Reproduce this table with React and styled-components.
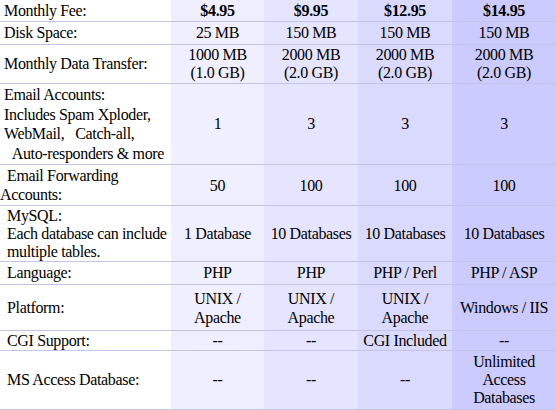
import React from "react";
import styled, { createGlobalStyle } from "styled-components";

const Global = createGlobalStyle`
  html, body { margin: 0; padding: 0; background: #ffffff; }
  body { font-family: "Liberation Serif", "Times New Roman", serif; font-size: 16px; color: #000; letter-spacing: -0.35px; }
`;

const COLS = ["#ffffff", "#efefff", "#e5e5ff", "#dadaff", "#cbcbff"];

const Table = styled.div`
  width: 556px;
  display: flex;
  flex-direction: column;
`;

const Row = styled.div`
  display: grid;
  grid-template-columns: 171px 93px 94px 94px 104px;
  height: ${(p) => p.$h}px;
  border-bottom: 1px solid #c4c4e6;
  line-height: ${(p) => p.$lh || 18}px;
`;

const Label = styled.div`
  display: flex;
  flex-direction: column;
  justify-content: center;
  background: #ffffff;
  padding-left: 4px;
  white-space: pre;
`;

const LabelLine = styled.span`
  padding-left: ${(p) => p.$indent || 0}px;
  margin-left: ${(p) => (p.$out ? -4 : 0)}px;
`;

const Cell = styled.div`
  display: flex;
  flex-direction: column;
  justify-content: center;
  align-items: center;
  text-align: center;
  background: ${(p) => COLS[p.$col]};
  font-weight: ${(p) => (p.$bold ? 700 : 400)};
  white-space: nowrap;
`;

const rows = [
  { h: 21, label: [["Monthly Fee:"]], bold: true, vals: [["$4.95"], ["$9.95"], ["$12.95"], ["$14.95"]] },
  { h: 22, label: [["Disk Space:"]], vals: [["25 MB"], ["150 MB"], ["150 MB"], ["150 MB"]] },
  {
    h: 38,
    label: [["Monthly Data Transfer:"]],
    vals: [
      ["1000 MB", "(1.0 GB)"],
      ["2000 MB", "(2.0 GB)"],
      ["2000 MB", "(2.0 GB)"],
      ["2000 MB", "(2.0 GB)"],
    ],
  },
  {
    h: 80,
    lh: 19.5,
    label: [
      ["Email Accounts:"],
      ["Includes Spam Xploder,"],
      ["WebMail,   Catch-all,"],
      [" Auto-responders & more", 5],
    ],
    vals: [["1"], ["3"], ["3"], ["3"]],
  },
  {
    h: 40,
    lh: 19,
    label: [["Email Forwarding", 3], ["Accounts:", 0, true]],
    vals: [["50"], ["100"], ["100"], ["100"]],
  },
  {
    h: 55,
    label: [["MySQL:", 3], ["Each database can include", 3], ["multiple tables.", 3]],
    vals: [["1 Database"], ["10 Databases"], ["10 Databases"], ["10 Databases"]],
  },
  { h: 22, label: [["Language:", 3]], vals: [["PHP"], ["PHP"], ["PHP / Perl"], ["PHP / ASP"]] },
  {
    h: 45,
    lh: 19,
    label: [["Platform:", 3]],
    vals: [["UNIX /", "Apache"], ["UNIX /", "Apache"], ["UNIX /", "Apache"], ["Windows / IIS"]],
  },
  { h: 19, label: [["CGI Support:", 3]], vals: [["--"], ["--"], ["CGI Included"], ["--"]] },
  {
    h: 58,
    label: [["MS Access Database:", 3]],
    vals: [["--"], ["--"], ["--"], ["Unlimited", "Access", "Databases"]],
  },
];

export default function App() {
  return (
    <>
      <Global />
      <Table>
        {rows.map((r, i) => (
          <Row key={i} $h={r.h} $lh={r.lh}>
            <Label>
              {r.label.map(([t, ind, out], j) => (
                <LabelLine key={j} $indent={ind} $out={out}>
                  {t}
                </LabelLine>
              ))}
            </Label>
            {r.vals.map((v, c) => (
              <Cell key={c} $col={c + 1} $bold={r.bold}>
                {v.map((line, k) => (
                  <span key={k}>{line}</span>
                ))}
              </Cell>
            ))}
          </Row>
        ))}
      </Table>
    </>
  );
}
